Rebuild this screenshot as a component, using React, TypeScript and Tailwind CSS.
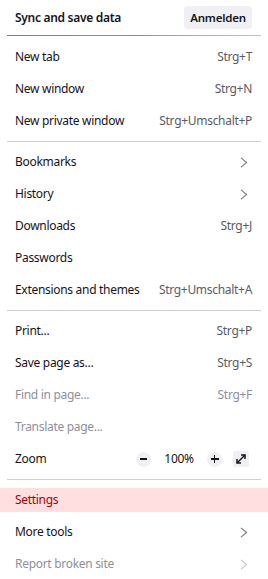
import React from 'react';

type Item = {
  label: string;
  shortcut?: string;
  sub?: boolean;
  disabled?: boolean;
  active?: boolean;
};

const groups: Item[][] = [
  [
    { label: 'New tab', shortcut: 'Strg+T' },
    { label: 'New window', shortcut: 'Strg+N' },
    { label: 'New private window', shortcut: 'Strg+Umschalt+P' },
  ],
  [
    { label: 'Bookmarks', sub: true },
    { label: 'History', sub: true },
    { label: 'Downloads', shortcut: 'Strg+J' },
    { label: 'Passwords' },
    { label: 'Extensions and themes', shortcut: 'Strg+Umschalt+A' },
  ],
  [
    { label: 'Print...', shortcut: 'Strg+P' },
    { label: 'Save page as...', shortcut: 'Strg+S' },
    { label: 'Find in page...', shortcut: 'Strg+F', disabled: true },
    { label: 'Translate page...', disabled: true },
  ],
];

const Chevron = ({ light }: { light?: boolean }) => (
  <svg width="8" height="11" viewBox="0 0 8 11" className={light ? 'text-[#c4c4cc]' : 'text-[#76767f]'}>
    <path d="M1 0.8 L6.6 5.5 L1 10.2" fill="none" stroke="currentColor" strokeWidth="1.1" />
  </svg>
);

const Separator = () => <div className="mx-[7px] my-1 h-px bg-[#cfcfd8]" />;

const Row = ({ item }: { item: Item }) => (
  <div className="flex h-8 items-center py-1">
    <div
      className={`flex h-6 w-full items-center justify-between pl-[15px] pr-4 ${
        item.active ? 'bg-[#ffdfdf] text-[#a4000f]' : item.disabled ? 'text-[#8f8f9d]' : 'text-[#15141a]'
      }`}
    >
      <span>{item.label}</span>
      {item.shortcut && (
        <span className={item.disabled ? 'text-[#8f8f9d]' : 'text-[#5b5b66]'}>{item.shortcut}</span>
      )}
      {item.sub && (
        <span className="pr-[4px]">
          <Chevron light={item.disabled} />
        </span>
      )}
    </div>
  </div>
);

export default function App() {
  return (
    <div
      className="h-[579px] w-[268px] overflow-hidden bg-white text-[12px] leading-none tracking-[-0.3px]"
      style={{ fontFamily: '"Noto Sans", "Open Sans", sans-serif' }}
    >
      <div className="flex h-[35px] items-center justify-between pl-[15px] pr-4">
        <span className="font-semibold text-[#15141a]">Sync and save data</span>
        <button className="h-[23px] w-[68px] rounded-[4px] bg-[#f0f0f4] text-[11.5px] font-semibold tracking-[-0.2px] text-[#15141a]">
          Anmelden
        </button>
      </div>
      <div className="mx-[7px] h-px bg-gradient-to-r from-[#9059ff] via-[#ff4aa2] to-[#ffbd4f]" />
      <div className="h-[5px]" />
      {groups.map((g, gi) => (
        <React.Fragment key={gi}>
          {gi > 0 && <Separator />}
          {g.map((item) => (
            <Row key={item.label} item={item} />
          ))}
        </React.Fragment>
      ))}
      <div className="flex h-8 items-center justify-between pl-[15px] pr-[19px] text-[#15141a]">
        <span>Zoom</span>
        <div className="flex items-center">
          <div className="flex h-[15px] w-[15px] items-center justify-center rounded-full bg-[#f0f0f4]">
            <div className="h-[1.5px] w-[7px] bg-[#15141a]" />
          </div>
          <span className="ml-[13px] mr-[13px] w-[30px] text-center">100%</span>
          <div className="relative flex h-[15px] w-[15px] items-center justify-center rounded-full bg-[#f0f0f4]">
            <div className="h-[1.5px] w-[8px] bg-[#15141a]" />
            <div className="absolute h-[8px] w-[1.5px] bg-[#15141a]" />
          </div>
          <div className="ml-[11px] flex h-4 w-4 items-center justify-center rounded-[2px] bg-[#f0f0f4]">
            <svg width="12" height="12" viewBox="0 0 12 12" fill="none" stroke="#15141a" strokeWidth="1.5">
              <path d="M2 10 L10 2" />
              <path d="M6 2 H10 V6" />
              <path d="M2 6 V10 H6" />
            </svg>
          </div>
        </div>
      </div>
      <Separator />
      <Row item={{ label: 'Settings', active: true }} />
      <Row item={{ label: 'More tools', sub: true }} />
      <Row item={{ label: 'Report broken site', sub: true, disabled: true }} />
    </div>
  );
}
